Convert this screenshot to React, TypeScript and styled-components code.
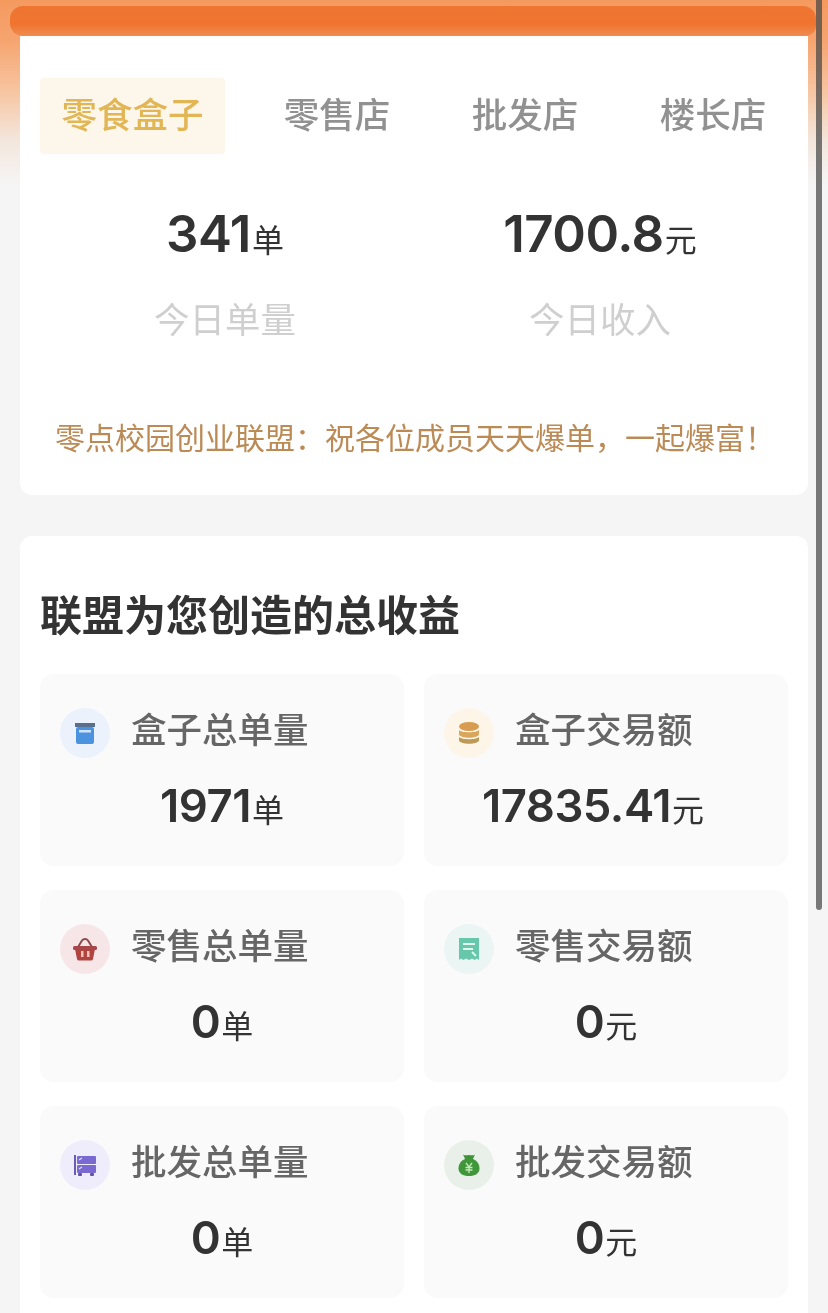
import React from "react";
import styled, { createGlobalStyle } from "styled-components";

const Global = createGlobalStyle`
  html, body { margin: 0; padding: 0; background: #f5f5f5; }
  body { width: 828px; height: 1313px; overflow: hidden; font-family: "Noto Sans CJK SC", "Liberation Sans", sans-serif; }
`;

const Page = styled.div`
  position: relative;
  width: 828px;
  height: 1313px;
  overflow: hidden;
  box-sizing: border-box;
  padding: 6px 20px 0;
  filter: blur(0.45px);
  background: linear-gradient(180deg, #f59a5f 0px, #f6a46f 40px, #f7c4a0 90px, #f3e6dc 140px, #f5f5f5 185px);
`;

const TopBar = styled.div`
  position: relative;
  z-index: 1;
  height: 30px;
  margin: 0 -8px 0 -10px;
  border-radius: 13px 13px 10px 13px;
  background: linear-gradient(180deg, #ee7631 0%, #ef7430 60%, #f08c50 100%);
`;

const ScrollThumb = styled.div`
  position: absolute;
  top: 0;
  left: 816px;
  width: 6px;
  height: 910px;
  background: rgba(70, 70, 70, 0.72);
  border-radius: 0 0 3px 3px;
  z-index: 2;
`;

const Card = styled.section`
  background: #fff;
  border-radius: 12px;
`;

const SummaryCard = styled(Card)`
  height: 459px;
  padding-top: 42px;
  box-sizing: border-box;
  border-radius: 0 0 12px 12px;
`;

const Tabs = styled.div`
  display: flex;
  padding-left: 20px;
  height: 76px;
`;

const Tab = styled.div<{ $active?: boolean }>`
  flex: ${(p) => (p.$active ? "0 0 185px" : "0 0 188px")};
  margin-right: ${(p) => (p.$active ? "18px" : "0")};
  box-sizing: border-box;
  padding-bottom: 7px;
  display: flex;
  align-items: center;
  justify-content: center;
  font-size: 35.5px;
  font-weight: 500;
  color: ${(p) => (p.$active ? "#e2b654" : "#919191")};
  background: ${(p) => (p.$active ? "#fdf6ea" : "transparent")};
  border-radius: 4px;
`;

const Stats = styled.div`
  display: grid;
  grid-template-columns: 370px 370px;
  column-gap: 5px;
  padding-left: 20px;
  margin-top: 50px;
`;

const Stat = styled.div`
  display: flex;
  flex-direction: column;
  align-items: center;
`;

const Figure = styled.div<{ $size: number }>`
  display: flex;
  align-items: baseline;
  justify-content: center;
  font-family: "Inter", "Liberation Sans", sans-serif;
  font-size: ${(p) => p.$size}px;
  font-weight: 600;
  color: #333;
  line-height: 60px;
  letter-spacing: -0.5px;
`;

const Unit = styled.span`
  font-family: "Noto Sans CJK SC", sans-serif;
  font-size: 32px;
  font-weight: 400;
  letter-spacing: 0;
  margin-left: 1px;
`;

const StatLabel = styled.div`
  margin-top: 27px;
  font-size: 35.5px;
  line-height: 46px;
  color: #cfcfcf;
`;

const Slogan = styled.div`
  margin-top: 75px;
  padding-left: 35px;
  font-size: 30px;
  line-height: 40px;
  white-space: nowrap;
  color: #bb8a55;
`;

const TotalsCard = styled(Card)`
  margin-top: 41px;
  height: 800px;
  padding: 53px 20px 0;
  box-sizing: border-box;
`;

const Title = styled.h2`
  margin: 0;
  font-size: 42px;
  line-height: 48px;
  font-weight: 700;
  color: #333;
`;

const TileGrid = styled.div`
  display: grid;
  grid-template-columns: 364px 364px;
  grid-auto-rows: 192px;
  column-gap: 20px;
  row-gap: 24px;
  margin-top: 37px;
`;

const Tile = styled.div`
  background: #fafafa;
  border-radius: 14px;
  padding: 34px 0 0 20px;
  box-sizing: border-box;
`;

const TileHead = styled.div`
  display: flex;
  align-items: center;
  gap: 21px;
  height: 50px;
`;

const IconDisc = styled.div<{ $bg: string }>`
  width: 50px;
  height: 50px;
  border-radius: 50%;
  background: ${(p) => p.$bg};
  display: flex;
  align-items: center;
  justify-content: center;
  flex: none;
`;

const TileLabel = styled.div`
  font-size: 35.5px;
  font-weight: 500;
  color: #666;
  margin-top: -12px;
`;

const TileValue = styled.div<{ $shift?: number }>`
  margin: 18px 0 0 -20px;
  padding-right: ${(p) => p.$shift ?? 0}px;
`;

const BoxIcon = () => (
  <svg width="24" height="24" viewBox="0 0 24 24">
    <rect x="2" y="2" width="20" height="4" fill="#5a6f8c" />
    <rect x="3" y="6" width="18" height="17" rx="2" fill="#4b93df" />
    <rect x="6" y="9" width="12" height="2.5" fill="#cfe3f8" />
  </svg>
);

const CoinsIcon = () => (
  <svg width="24" height="24" viewBox="0 0 24 24">
    <ellipse cx="12" cy="5.5" rx="10" ry="4.5" fill="#d79c52" />
    <path d="M2 9c2 3 18 3 20 0v4c0 5-20 5-20 0z" fill="#d9a75c" />
    <path d="M2 16c3 3 17 3 20 0v3c0 5-20 5-20 0z" fill="#bd9a56" />
  </svg>
);

const BasketIcon = () => (
  <svg width="26" height="24" viewBox="0 0 26 24">
    <path d="M6 10 10 3.5c1.5-2 4.5-2 6 0L20 10" fill="none" stroke="#8d4a4d" strokeWidth="2" />
    <rect x="1" y="9" width="24" height="4" rx="1.5" fill="#a8474a" />
    <path d="M3 12h20l-2 10a2 2 0 0 1-2 1.5H7A2 2 0 0 1 5 22z" fill="#b1443f" />
    <rect x="9" y="14" width="2.5" height="6" fill="#f5c3b5" />
    <rect x="15" y="14" width="2.5" height="6" fill="#f5c3b5" />
  </svg>
);

const ReceiptIcon = () => (
  <svg width="22" height="24" viewBox="0 0 22 24">
    <path d="M1 1h20v22l-2-1.5-2.5 1.5-2.5-1.5-3 1.5-3-1.5-2.5 1.5L3 21.5 1 23z" fill="#67c7ab" />
    <path d="M5 7h12M5 12h10M14 15l4 4" stroke="#e3f5ef" strokeWidth="1.8" fill="none" />
  </svg>
);

const DrawerIcon = () => (
  <svg width="24" height="24" viewBox="0 0 24 24">
    <rect x="1" y="2" width="2" height="20" fill="#6a5bb8" />
    <rect x="4" y="3" width="19" height="8" rx="1" fill="#7a69d0" />
    <rect x="4" y="12" width="19" height="8" rx="1" fill="#7a69d0" />
    <path d="M6 7l3-2M6 16l3-2" stroke="#e4dff8" strokeWidth="1.2" />
    <rect x="5" y="20" width="4" height="3" rx="1" fill="#5f5799" />
    <rect x="17" y="20" width="4" height="3" rx="1" fill="#5f5799" />
  </svg>
);

const MoneyBagIcon = () => (
  <svg width="22" height="24" viewBox="0 0 22 24">
    <path d="M5 1.5c2 1.5 4 .5 6 .5s4 1 6-.5L14.5 7h-7z" fill="#3f9436" />
    <path d="M7 6h8c4 1.5 6.5 5 6.5 9.5 0 5-4.5 7.5-10.5 7.5S.5 20.5.5 15.5C.5 11 3 7.5 7 6z" fill="#40963a" />
    <path d="M8 10l3 4 3-4M7.5 14.5h7M7.5 17h7M11 14v6" stroke="#c4eab6" strokeWidth="1.3" fill="none" />
  </svg>
);

const tiles = [
  { label: "盒子总单量", value: "1971", unit: "单", bg: "#ebf2fb", icon: <BoxIcon /> },
  { label: "盒子交易额", value: "17835.41", unit: "元", bg: "#fdf6e8", icon: <CoinsIcon />, shift: 26 },
  { label: "零售总单量", value: "0", unit: "单", bg: "#f6e6e8", icon: <BasketIcon /> },
  { label: "零售交易额", value: "0", unit: "元", bg: "#ebf5f3", icon: <ReceiptIcon /> },
  { label: "批发总单量", value: "0", unit: "单", bg: "#efedfb", icon: <DrawerIcon /> },
  { label: "批发交易额", value: "0", unit: "元", bg: "#e9f0e9", icon: <MoneyBagIcon /> },
];

export default function App() {
  return (
    <Page>
      <Global />
      <ScrollThumb />
      <TopBar />
      <SummaryCard>
        <Tabs>
          <Tab $active>零食盒子</Tab>
          <Tab>零售店</Tab>
          <Tab>批发店</Tab>
          <Tab>楼长店</Tab>
        </Tabs>
        <Stats>
          <Stat>
            <Figure $size={51}>341<Unit>单</Unit></Figure>
            <StatLabel>今日单量</StatLabel>
          </Stat>
          <Stat>
            <Figure $size={51}>1700.8<Unit>元</Unit></Figure>
            <StatLabel>今日收入</StatLabel>
          </Stat>
        </Stats>
        <Slogan>零点校园创业联盟：祝各位成员天天爆单，一起爆富！</Slogan>
      </SummaryCard>
      <TotalsCard>
        <Title>联盟为您创造的总收益</Title>
        <TileGrid>
          {tiles.map((t) => (
            <Tile key={t.label}>
              <TileHead>
                <IconDisc $bg={t.bg}>{t.icon}</IconDisc>
                <TileLabel>{t.label}</TileLabel>
              </TileHead>
              <TileValue $shift={t.shift}>
                <Figure $size={45.5}>{t.value}<Unit>{t.unit}</Unit></Figure>
              </TileValue>
            </Tile>
          ))}
        </TileGrid>
      </TotalsCard>
    </Page>
  );
}
